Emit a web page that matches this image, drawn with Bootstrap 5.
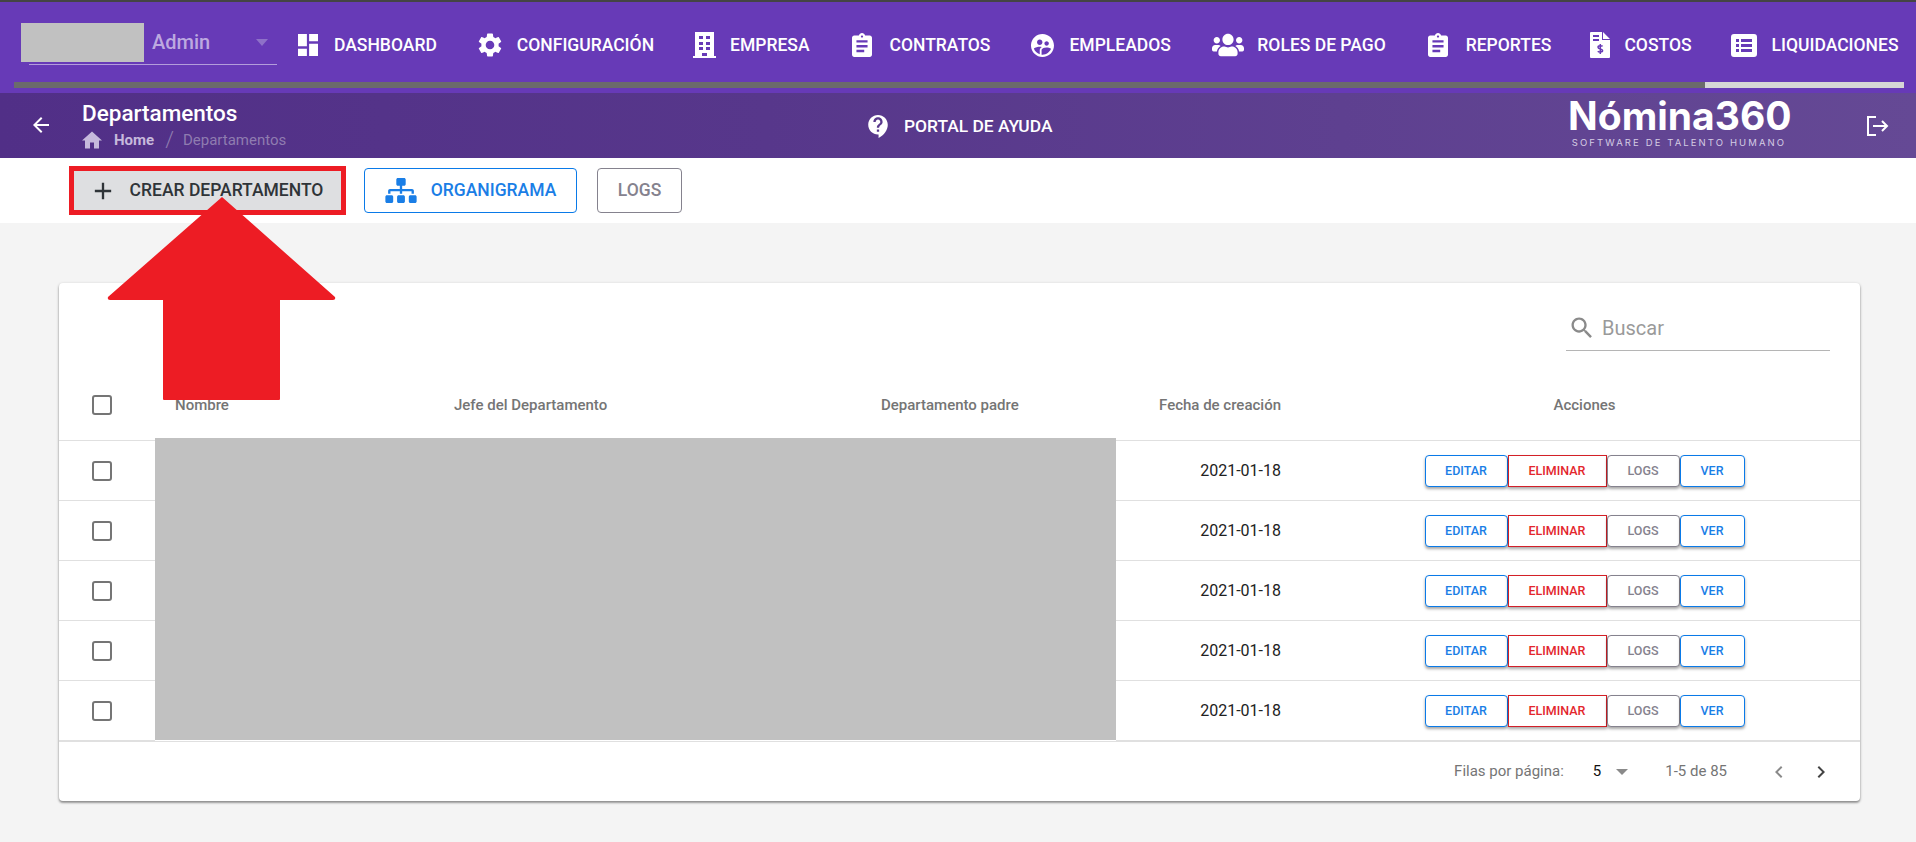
<!DOCTYPE html>
<html lang="es">
<head>
    <meta charset="UTF-8">
    <meta name="viewport" content="width=device-width, initial-scale=1.0">
    <title>Nómina360 - Departamentos</title>
    <link href="https://cdn.jsdelivr.net/npm/bootstrap@5.3.0/dist/css/bootstrap.min.css" rel="stylesheet">
    <style>
        body {
            position: relative;
            background-color: #f4f4f4;
            font-family: Roboto, "Liberation Sans", sans-serif;
            min-height: 842px;
            overflow: hidden;
        }
        .ico { fill: currentColor; flex: none; display: block; }

        /* top menu */
        .menu-top {
            height: 93px;
            background-color: #673ab7;
            border-top: 2px solid #444;
            color: #fff;
        }
        .menu-fila { height: 80px; padding-left: 21px; }
        .empresa-sel { width: 256px; height: 62px; margin-top: 21px; }
        .gris-tapa { width: 123px; height: 39px; background-color: #c1c1c1; }
        .empresa-nom { color: #bda9e0; font-size: 20px; font-weight: 500; margin-left: 8px; margin-top: -2px; }
        .empresa-flecha {
            width: 0; height: 0; margin-left: auto; margin-right: 9px;
            border-left: 6.5px solid transparent; border-right: 6.5px solid transparent; border-top: 7px solid #8e71c8;
        }
        .empresa-linea { height: 1px; background-color: #b39ddb; margin: 2px 0 0 8px; width: 248px; }
        .tabs-fila { gap: 41px; margin-left: 21px; margin-top: 5px; height: 76px; }
        .tab-item { display: flex; align-items: center; gap: 15px; color: #fff; text-decoration: none; font-size: 17.5px; font-weight: 500; white-space: nowrap; }
        .tab-dash { gap: 16px; }
        .tab-empresa { margin-left: -2px; gap: 14px; }
        .tab-clip { margin-left: 1.5px; gap: 17.5px; }
        .tab-roles { gap: 13.5px; }
        .tab-costos { margin-left: -2px; gap: 14px; }
        .tab-liq { margin-left: -2px; }
        .tab-barra { height: 6px; margin: 0 12px 0 14px; background-color: #6b6b6b; }
        .tab-activa { width: 199px; height: 6px; background-color: #d6d6d6; }

        /* subheader */
        .sub-head {
            height: 65px;
            background: linear-gradient(90deg, #512f87 0%, #57378b 40%, #654995 100%);
            color: #fff;
            padding: 0 27px 0 29px;
        }
        .sub-izq { width: 839px; }
        .sub-volver { margin-top: -2px; }
        .sub-textos { margin-left: 29px; }
        .sub-titulo { font-size: 22.5px; font-weight: 500; line-height: 24px; }
        .migas { font-size: 15px; line-height: 18px; margin-top: 5px; color: #8f7cb0; }
        .migas b { color: #c6b9dc; font-weight: 700; }
        .migas-casa { color: #c6b9dc; }
        .migas-barra { font-size: 22px; font-weight: 300; margin: 0 9px 0 11px; line-height: 18px; }
        .portal { gap: 16px; font-size: 17.4px; font-weight: 500; margin-top: 2px; }
        .logo-bloque { margin-left: auto; margin-right: 77px; text-align: center; width: 222px; margin-top: -5px; }
        .logo-nom { font-family: Inter, Lato, sans-serif; font-weight: 700; font-size: 39px; line-height: 38px; }
        .logo-sub { font-family: Inter, Lato, sans-serif; font-size: 9.5px; line-height: 12px; letter-spacing: 2.1px; color: #d5cce4; white-space: nowrap; margin-top: 2px; }

        /* toolbar */
        .barra-accion { height: 65px; background-color: #fff; padding-left: 69px; }
        .btn-accion { height: 45px; font-family: Roboto, sans-serif; font-size: 17.5px; font-weight: 500; border-radius: 4px; background: #fff; display: flex; align-items: center; justify-content: center; padding: 0; white-space: nowrap; }
        .btn-crear { width: 277px; height: 49px; background-color: #dedfe1; border: 5px solid #ed1c24; border-radius: 0; color: #2f3438; gap: 13px; padding-right: 3px; }
        .btn-crear:hover { background-color: #dedfe1; border-color: #ed1c24; color: #2f3438; }
        .btn-orga { width: 213px; margin-left: 18px; border: 1px solid #0a7ae8; color: #1a7ee6; gap: 14px; }
        .btn-logs { width: 85px; margin-left: 20px; border: 1px solid #85828e; color: #85828e; }

        /* arrow drawn over the screenshot */
        .flecha-roja { position: absolute; left: 107px; top: 197px; z-index: 5; }

        /* table card */
        .tarjeta {
            margin: 60px 56px 0 59px;
            height: 518px;
            border: 0;
            border-radius: 4px;
            box-shadow: 0 1px 3px rgba(0,0,0,.3), 0 2px 2px rgba(0,0,0,.25);
        }
        .busca-fila { height: 87px; padding-right: 30px; }
        .busca-caja { width: 264px; height: 46px; margin-top: 22px; border-bottom: 1px solid #b5b5b5; color: #8a8a8a; gap: 6px; padding-left: 2px; }
        .busca-input { border: 0; padding: 0; font-family: Roboto, sans-serif; font-size: 20px; color: #333; box-shadow: none; }
        .busca-input::placeholder { color: #9a9a9a; }
        .tabla-dep { table-layout: fixed; margin: 0; --bs-table-border-color: #e0e0e0; }
        .ancho-chk { width: 96px; }
        .ancho-nombre { width: 279px; }
        .ancho-jefe { width: 427px; }
        .ancho-padre { width: 255px; }
        .ancho-fecha { width: 165px; }
        .tabla-dep th { height: 70px; font-size: 15px; font-weight: 500; color: #757575; vertical-align: middle; padding: 0 0 0 20px; }
        .tabla-dep td { height: 60px; vertical-align: middle; padding: 1px 0 0; font-size: 16px; color: #222; }
        .tabla-dep th.col-chk { padding: 0 0 0 33px; }
        .tabla-dep td.col-chk { padding: 2px 0 0 33px; }
        .tabla-dep .col-fecha { text-align: right; padding-left: 0; }
        .tabla-dep .col-acc { text-align: center; padding-left: 28px; }
        .tabla-dep .borrado { position: relative; background-color: #c1c1c1; border: 0; }
        /* the blanking starts a little above the first row line */
        .tabla-dep .borrado::before { content: ""; position: absolute; left: 0; right: 0; top: -3px; height: 4px; background-color: #c1c1c1; }
        .chk-caja { width: 20px; height: 20px; margin: 0; display: block; background-color: #fff; border: 2.5px solid #757575; border-radius: 3px; appearance: none; }
        .acc-grupo { display: inline-flex; vertical-align: middle; }
        .acc-btn { height: 32px; padding: 1px 0 0; font-family: Roboto, sans-serif; font-size: 12.5px; font-weight: 500; background: #fff; border-radius: 4px; box-shadow: 0 2px 3px rgba(0,0,0,.35); }
        .acc-azul { border: 1px solid #0a7ae8; color: #1a7ee6; }
        .acc-rojo { border: 1px solid #d32027; color: #e3262d; border-radius: 0; width: 99px; }
        .acc-gris { border: 1px solid #85828e; color: #85828e; width: 73px; }
        .acc-editar { width: 83px; }
        .acc-ver { width: 65px; }
        .pie-tabla { height: 60px; border-top: 1px solid #e0e0e0; font-size: 15px; color: #757575; padding: 1px 27px 0 0; }
        .pie-num { color: #111; margin-left: 29px; }
        .pie-flecha { width: 0; height: 0; margin-left: 15px; border-left: 6px solid transparent; border-right: 6px solid transparent; border-top: 6px solid #8a8a8a; }
        .pie-rango { margin-left: 37px; }
        .pie-ant { margin-left: 40px; color: #8a8a8a; }
        .pie-sig { margin-left: 18px; color: #444; }
    </style>
</head>
<body>
    <!-- menu principal -->
    <nav class="menu-top">
        <div class="menu-fila d-flex">
            <div class="empresa-sel flex-shrink-0">
                <div class="d-flex align-items-center">
                    <div class="gris-tapa"></div>
                    <span class="empresa-nom">Admin</span>
                    <span class="empresa-flecha"></span>
                </div>
                <div class="empresa-linea"></div>
            </div>
            <div class="tabs-fila d-flex align-items-center">
                <a class="tab-item tab-dash" href="#">
                    <svg class="ico" width="20" height="22" viewBox="3 3 18 18" preserveAspectRatio="none"><path d="M3 13h8V3H3v10zm0 8h8v-6H3v6zm10 0h8V11h-8v10zm0-18v6h8V3h-8z"/></svg>
                    DASHBOARD
                </a>
                <a class="tab-item" href="#">
                    <svg class="ico" width="24" height="24" viewBox="2 2 20 20"><path d="M19.14 12.94c.04-.3.06-.61.06-.94 0-.32-.02-.64-.07-.94l2.03-1.58a.49.49 0 0 0 .12-.61l-1.92-3.32a.488.488 0 0 0-.59-.22l-2.39.96c-.5-.38-1.03-.7-1.62-.94l-.36-2.54a.484.484 0 0 0-.48-.41h-3.84c-.24 0-.43.17-.47.41l-.36 2.54c-.59.24-1.13.57-1.62.94l-2.39-.96c-.22-.08-.47 0-.59.22L2.74 8.87c-.12.21-.08.47.12.61l2.03 1.58c-.05.3-.09.63-.09.94s.02.64.07.94l-2.03 1.58a.49.49 0 0 0-.12.61l1.92 3.32c.12.22.37.29.59.22l2.39-.96c.5.38 1.03.7 1.62.94l.36 2.54c.05.24.24.41.48.41h3.84c.24 0 .44-.17.47-.41l.36-2.54c.59-.24 1.13-.56 1.62-.94l2.39.96c.22.08.47 0 .59-.22l1.92-3.32c.12-.22.07-.47-.12-.61l-2.01-1.58zM12 15.6c-1.98 0-3.6-1.62-3.6-3.6s1.62-3.6 3.6-3.6 3.6 1.62 3.6 3.6-1.62 3.6-3.6 3.6z"/></svg>
                    CONFIGURACIÓN
                </a>
                <a class="tab-item tab-empresa" href="#">
                    <svg class="ico" width="23" height="26" viewBox="0 0 23 26"><path fill-rule="evenodd" d="M2 0h19v24h2v2H0v-2h2zM6 4v3h4V4zM13 4v3h4V4zM6 10v3h4v-3zM13 10v3h4v-3zM6 15v3h4v-3zM13 15v3h4v-3zM9 21v3h5v-3z"/></svg>
                    EMPRESA
                </a>
                <a class="tab-item tab-clip" href="#">
                    <svg class="ico" width="20" height="24" viewBox="3 1 18 20" preserveAspectRatio="none"><path d="M19 3h-4.18C14.4 1.84 13.3 1 12 1c-1.3 0-2.4.84-2.82 2H5c-1.1 0-2 .9-2 2v14c0 1.1.9 2 2 2h14c1.1 0 2-.9 2-2V5c0-1.1-.9-2-2-2zm-7 0c.55 0 1 .45 1 1s-.45 1-1 1-1-.45-1-1 .45-1 1-1zm2 14H7v-2h7v2zm3-4H7v-2h10v2zm0-4H7V7h10v2z"/></svg>
                    CONTRATOS
                </a>
                <a class="tab-item" href="#">
                    <svg class="ico" width="23" height="23" viewBox="2 2 20 20"><path d="M11.99 2c-5.52 0-10 4.48-10 10s4.48 10 10 10 10-4.48 10-10-4.48-10-10-10zm3.61 6.34c1.07 0 1.93.86 1.93 1.93 0 1.07-.86 1.93-1.93 1.93-1.07 0-1.93-.86-1.93-1.93-.01-1.07.86-1.93 1.93-1.93zm-6-1.58c1.3 0 2.36 1.06 2.36 2.36 0 1.3-1.06 2.36-2.36 2.36s-2.36-1.06-2.36-2.36c0-1.31 1.05-2.36 2.36-2.36zm0 9.13v3.75c-2.4-.75-4.3-2.6-5.14-4.96 1.05-1.12 3.67-1.69 5.14-1.69.53 0 1.2.08 1.9.22-1.64.87-1.9 2.02-1.9 2.68zM11.99 20c-.27 0-.53-.01-.79-.04v-4.07c0-1.42 2.94-2.13 4.4-2.13 1.07 0 2.92.39 3.84 1.15-1.17 2.97-4.06 5.09-7.45 5.09z"/></svg>
                    EMPLEADOS
                </a>
                <a class="tab-item tab-roles" href="#">
                    <svg class="ico" width="32" height="26" viewBox="0 32 640 448"><path d="M96 224c35.3 0 64-28.7 64-64s-28.7-64-64-64-64 28.7-64 64 28.7 64 64 64zm448 0c35.3 0 64-28.7 64-64s-28.7-64-64-64-64 28.7-64 64 28.7 64 64 64zm32 32h-64c-17.6 0-33.5 7.1-45.1 18.6 40.3 22.1 68.9 62 75.1 109.4h66c17.7 0 32-14.3 32-32v-32c0-35.3-28.7-64-64-64zm-256 0c61.9 0 112-50.1 112-112S381.9 32 320 32 208 82.1 208 144s50.1 112 112 112zm76.8 32h-8.3c-20.8 10-43.9 16-68.5 16s-47.6-6-68.5-16h-8.3C179.6 288 128 339.6 128 403.2V432c0 26.5 21.5 48 48 48h288c26.5 0 48-21.5 48-48v-28.8c0-63.6-51.6-115.2-115.2-115.2zm-223.7-13.4C161.5 263.1 145.6 256 128 256H64c-35.3 0-64 28.7-64 64v32c0 17.7 14.3 32 32 32h65.9c6.3-47.4 34.9-87.3 75.2-109.4z"/></svg>
                    ROLES DE PAGO
                </a>
                <a class="tab-item tab-clip" href="#">
                    <svg class="ico" width="20" height="24" viewBox="3 1 18 20" preserveAspectRatio="none"><path d="M19 3h-4.18C14.4 1.84 13.3 1 12 1c-1.3 0-2.4.84-2.82 2H5c-1.1 0-2 .9-2 2v14c0 1.1.9 2 2 2h14c1.1 0 2-.9 2-2V5c0-1.1-.9-2-2-2zm-7 0c.55 0 1 .45 1 1s-.45 1-1 1-1-.45-1-1 .45-1 1-1zm2 14H7v-2h7v2zm3-4H7v-2h10v2zm0-4H7V7h10v2z"/></svg>
                    REPORTES
                </a>
                <a class="tab-item tab-costos" href="#">
                    <svg class="ico" width="20" height="26" viewBox="0 0 20 26"><path fill-rule="evenodd" d="M1 0h11v8h8v17a1 1 0 0 1-1 1H1a1 1 0 0 1-1-1V1a1 1 0 0 1 1-1zM3 3v2h6V3zM3 7v2h6V7zM13 0l7 7h-7z"/><path d="M12.6 14.4c-.5-.8-4.6-1.2-4.6.8 0 2.2 4.6 1.3 4.6 3.4 0 2.1-4.1 1.7-4.8.7M10.3 12v10" fill="none" stroke="#673ab7" stroke-width="1.5"/></svg>
                    COSTOS
                </a>
                <a class="tab-item tab-liq" href="#">
                    <svg class="ico" width="26" height="23" viewBox="0 0 26 23"><path fill-rule="evenodd" d="M3 0h20a3 3 0 0 1 3 3v17a3 3 0 0 1-3 3H3a3 3 0 0 1-3-3V3a3 3 0 0 1 3-3zM5 5v3h3V5zM10 5v3h11V5zM5 10v3h3v-3zM10 10v3h11v-3zM5 15v3h3v-3zM10 15v3h11v-3z"/></svg>
                    LIQUIDACIONES
                </a>
            </div>
        </div>
        <div class="tab-barra d-flex justify-content-end"><div class="tab-activa"></div></div>
    </nav>

    <!-- cabecera de pagina -->
    <header class="sub-head d-flex align-items-center">
        <div class="sub-izq d-flex align-items-center">
            <svg class="ico sub-volver" width="24" height="24" viewBox="0 0 24 24"><path d="M20 11H7.83l5.59-5.59L12 4l-8 8 8 8 1.41-1.41L7.83 13H20v-2z"/></svg>
            <div class="sub-textos">
                <div class="sub-titulo">Departamentos</div>
                <div class="migas d-flex align-items-center">
                    <svg class="ico migas-casa me-2" width="20" height="20" viewBox="2 2 20 19"><path d="M10 20v-6h4v6h5v-8h3L12 3 2 12h3v8z"/></svg>
                    <b class="ms-1">Home</b>
                    <span class="migas-barra">/</span>
                    <span>Departamentos</span>
                </div>
            </div>
        </div>
        <div class="portal d-flex align-items-center">
            <svg class="ico" width="20" height="23" viewBox="3 2 17 20"><path d="M11.5 2C6.81 2 3 5.81 3 10.5S6.81 19 11.5 19h.5v3c4.86-2.34 8-7 8-11.5C20 5.81 16.19 2 11.5 2zm1 14.5h-2v-2h2v2zm0-3.5h-2c0-3.25 3-3 3-5 0-1.1-.9-2-2-2s-2 .9-2 2h-2c0-2.21 1.79-4 4-4s4 1.79 4 4c0 2.5-3 2.75-3 5z"/></svg>
            <span>PORTAL DE AYUDA</span>
        </div>
        <div class="logo-bloque">
            <div class="logo-nom">Nómina360</div>
            <div class="logo-sub">SOFTWARE DE TALENTO HUMANO</div>
        </div>
        <svg width="22" height="20" viewBox="0 0 22 20" fill="none" stroke="#fff" stroke-width="2"><path d="M9 1H1v18h8M6 10h14M15 5l5 5-5 5"/></svg>
    </header>

    <!-- acciones -->
    <div class="barra-accion d-flex align-items-center">
        <button class="btn btn-accion btn-crear">
            <svg class="ico" width="28" height="28" viewBox="0 0 24 24"><path d="M19 13h-6v6h-2v-6H5v-2h6V5h2v6h6v2z"/></svg>
            CREAR DEPARTAMENTO
        </button>
        <button class="btn btn-accion btn-orga">
            <svg class="ico" width="32" height="25" viewBox="0 0 640 512"><path d="M128 352H32c-17.67 0-32 14.33-32 32v96c0 17.67 14.33 32 32 32h96c17.67 0 32-14.33 32-32v-96c0-17.67-14.33-32-32-32zm-24-80h192v48h48v-48h192v48h48v-57.59c0-21.17-17.23-38.41-38.41-38.41H344v-64h40c17.67 0 32-14.33 32-32V32c0-17.67-14.33-32-32-32H256c-17.67 0-32 14.33-32 32v96c0 17.67 14.33 32 32 32h40v64H94.41C73.23 224 56 241.23 56 262.41V320h48v-48zm264 80h-96c-17.67 0-32 14.33-32 32v96c0 17.67 14.33 32 32 32h96c17.67 0 32-14.33 32-32v-96c0-17.67-14.33-32-32-32zm240 0h-96c-17.67 0-32 14.33-32 32v96c0 17.67 14.33 32 32 32h96c17.67 0 32-14.33 32-32v-96c0-17.67-14.33-32-32-32z"/></svg>
            ORGANIGRAMA
        </button>
        <button class="btn btn-accion btn-logs">LOGS</button>
    </div>

    <svg class="flecha-roja" width="229" height="203" viewBox="0 0 229 203"><path d="M115 0L228 100q1 3-2 3H173v99q0 1-1 1H57q-1 0-1-1V103H3q-3 0-2-3z" fill="#ed1c24"/></svg>

    <!-- tabla -->
    <div class="card tarjeta">
        <div class="busca-fila d-flex justify-content-end">
            <div class="busca-caja d-flex align-items-center">
                <svg class="ico" width="28" height="28" viewBox="0 0 24 24"><path d="M15.5 14h-.79l-.28-.27C15.41 12.59 16 11.11 16 9.5 16 5.91 13.09 3 9.5 3S3 5.91 3 9.5 5.91 16 9.5 16c1.61 0 3.09-.59 4.23-1.57l.27.28v.79l5 4.99L20.49 19l-4.99-5zm-6 0C7.01 14 5 11.99 5 9.5S7.01 5 9.5 5 14 7.01 14 9.5 11.99 14 9.5 14z"/></svg>
                <input class="form-control busca-input" type="text" placeholder="Buscar">
            </div>
        </div>
        <table class="table tabla-dep">
            <colgroup>
                <col class="ancho-chk"><col class="ancho-nombre"><col class="ancho-jefe"><col class="ancho-padre"><col class="ancho-fecha"><col>
            </colgroup>
            <thead>
                <tr>
                    <th class="col-chk"><input class="chk-caja" type="checkbox" aria-label="Seleccionar todo"></th>
                    <th>Nombre</th>
                    <th>Jefe del Departamento</th>
                    <th>Departamento padre</th>
                    <th class="col-fecha">Fecha de creación</th>
                    <th class="col-acc">Acciones</th>
                </tr>
            </thead>
            <tbody id="filas"></tbody>
        </table>
        <div class="pie-tabla d-flex align-items-center justify-content-end">
            <span>Filas por página:</span>
            <span class="pie-num">5</span>
            <span class="pie-flecha"></span>
            <span class="pie-rango">1-5 de 85</span>
            <svg class="ico pie-ant" width="24" height="24" viewBox="0 0 24 24"><path d="M15.41 7.41L14 6l-6 6 6 6 1.41-1.41L10.83 12z"/></svg>
            <svg class="ico pie-sig" width="24" height="24" viewBox="0 0 24 24"><path d="M10 6L8.59 7.41 13.17 12l-4.58 4.59L10 18l6-6z"/></svg>
        </div>
    </div>

    <script src="https://cdn.jsdelivr.net/npm/bootstrap@5.3.0/dist/js/bootstrap.bundle.min.js"></script>
    <script>
        // five visible rows, names are blanked out in the picture
        const filas = document.getElementById('filas');
        for (let i = 0; i < 5; i++) {
            filas.insertAdjacentHTML('beforeend', `
                <tr>
                    <td class="col-chk"><input class="chk-caja" type="checkbox" aria-label="Seleccionar fila"></td>
                    ${i === 0 ? '<td class="borrado" colspan="3" rowspan="5"></td>' : ''}
                    <td class="col-fecha">2021-01-18</td>
                    <td class="col-acc">
                        <div class="acc-grupo">
                            <button class="btn acc-btn acc-azul acc-editar">EDITAR</button>
                            <button class="btn acc-btn acc-rojo">ELIMINAR</button>
                            <button class="btn acc-btn acc-gris">LOGS</button>
                            <button class="btn acc-btn acc-azul acc-ver">VER</button>
                        </div>
                    </td>
                </tr>`);
        }
    </script>
</body>
</html>
